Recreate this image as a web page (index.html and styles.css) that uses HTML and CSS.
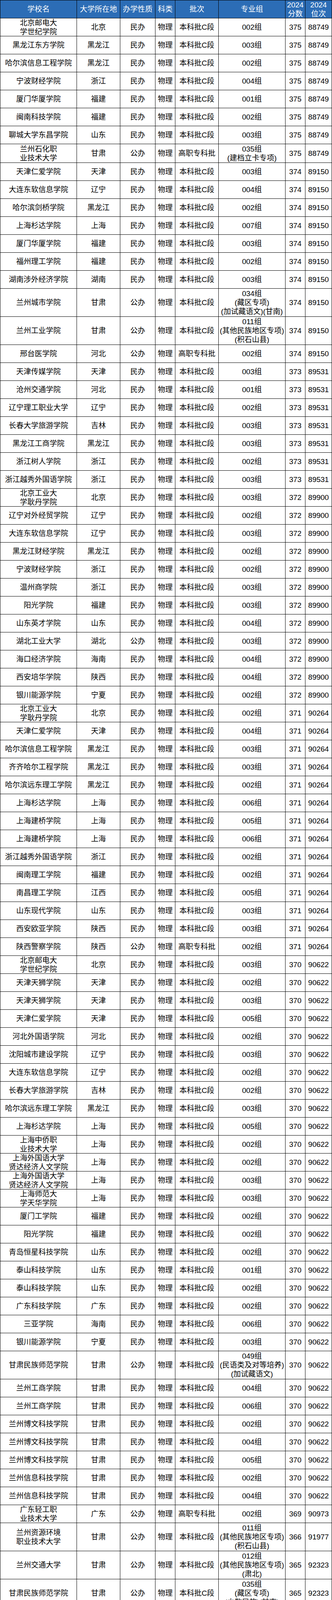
FILE: index.html
```html
<!DOCTYPE html>
<html lang="zh-CN">
<head>
<meta charset="utf-8">
<title>2024 分数位次</title>
<link rel="stylesheet" href="styles.css">
</head>
<body>
<div class="sheet">
<div class="row head"><div>学校名</div><div>大学所在地</div><div>办学性质</div><div>科类</div><div>批次</div><div>专业组</div><div><span>2024<br>分数</span></div><div><span>2024<br>位次</span></div></div>
<div class="row"><div><span>北京邮电大<br>学世纪学院</span></div><div>北京</div><div>民办</div><div>物理</div><div>本科批C段</div><div>002组</div><div>375</div><div>88749</div></div>
<div class="row"><div>黑龙江东方学院</div><div>黑龙江</div><div>民办</div><div>物理</div><div>本科批C段</div><div>003组</div><div>375</div><div>88749</div></div>
<div class="row"><div>哈尔滨信息工程学院</div><div>黑龙江</div><div>民办</div><div>物理</div><div>本科批C段</div><div>002组</div><div>375</div><div>88749</div></div>
<div class="row"><div>宁波财经学院</div><div>浙江</div><div>民办</div><div>物理</div><div>本科批C段</div><div>004组</div><div>375</div><div>88749</div></div>
<div class="row"><div>厦门华厦学院</div><div>福建</div><div>民办</div><div>物理</div><div>本科批C段</div><div>001组</div><div>375</div><div>88749</div></div>
<div class="row"><div>闽南科技学院</div><div>福建</div><div>民办</div><div>物理</div><div>本科批C段</div><div>002组</div><div>375</div><div>88749</div></div>
<div class="row"><div>聊城大学东昌学院</div><div>山东</div><div>民办</div><div>物理</div><div>本科批C段</div><div>003组</div><div>375</div><div>88749</div></div>
<div class="row h48"><div><span>兰州石化职<br>业技术大学</span></div><div>甘肃</div><div>公办</div><div>物理</div><div>高职专科批</div><div><span>035组<br>(建档立卡专项)</span></div><div>375</div><div>88749</div></div>
<div class="row"><div>天津仁爱学院</div><div>天津</div><div>民办</div><div>物理</div><div>本科批C段</div><div>003组</div><div>374</div><div>89150</div></div>
<div class="row"><div>大连东软信息学院</div><div>辽宁</div><div>民办</div><div>物理</div><div>本科批C段</div><div>004组</div><div>374</div><div>89150</div></div>
<div class="row"><div>哈尔滨剑桥学院</div><div>黑龙江</div><div>民办</div><div>物理</div><div>本科批C段</div><div>002组</div><div>374</div><div>89150</div></div>
<div class="row"><div>上海杉达学院</div><div>上海</div><div>民办</div><div>物理</div><div>本科批C段</div><div>007组</div><div>374</div><div>89150</div></div>
<div class="row"><div>厦门华厦学院</div><div>福建</div><div>民办</div><div>物理</div><div>本科批C段</div><div>003组</div><div>374</div><div>89150</div></div>
<div class="row"><div>福州理工学院</div><div>福建</div><div>民办</div><div>物理</div><div>本科批C段</div><div>002组</div><div>374</div><div>89150</div></div>
<div class="row"><div>湖南涉外经济学院</div><div>湖南</div><div>民办</div><div>物理</div><div>本科批C段</div><div>003组</div><div>374</div><div>89150</div></div>
<div class="row h72"><div>兰州城市学院</div><div>甘肃</div><div>公办</div><div>物理</div><div>本科批C段</div><div><span>034组<br>(藏区专项)<br>(加试藏语文)(甘南)</span></div><div>374</div><div>89150</div></div>
<div class="row h72"><div>兰州工业学院</div><div>甘肃</div><div>公办</div><div>物理</div><div>本科批C段</div><div><span>011组<br>(其他民族地区专项)<br>(积石山县)</span></div><div>374</div><div>89150</div></div>
<div class="row"><div>邢台医学院</div><div>河北</div><div>公办</div><div>物理</div><div>高职专科批</div><div>002组</div><div>374</div><div>89150</div></div>
<div class="row"><div>天津传媒学院</div><div>天津</div><div>民办</div><div>物理</div><div>本科批C段</div><div>003组</div><div>373</div><div>89531</div></div>
<div class="row"><div>沧州交通学院</div><div>河北</div><div>民办</div><div>物理</div><div>本科批C段</div><div>001组</div><div>373</div><div>89531</div></div>
<div class="row"><div>辽宁理工职业大学</div><div>辽宁</div><div>民办</div><div>物理</div><div>本科批C段</div><div>002组</div><div>373</div><div>89531</div></div>
<div class="row"><div>长春大学旅游学院</div><div>吉林</div><div>民办</div><div>物理</div><div>本科批C段</div><div>003组</div><div>373</div><div>89531</div></div>
<div class="row"><div>黑龙江工商学院</div><div>黑龙江</div><div>民办</div><div>物理</div><div>本科批C段</div><div>003组</div><div>373</div><div>89531</div></div>
<div class="row"><div>浙江树人学院</div><div>浙江</div><div>民办</div><div>物理</div><div>本科批C段</div><div>002组</div><div>373</div><div>89531</div></div>
<div class="row"><div>浙江越秀外国语学院</div><div>浙江</div><div>民办</div><div>物理</div><div>本科批C段</div><div>003组</div><div>373</div><div>89531</div></div>
<div class="row"><div><span>北京工业大<br>学耿丹学院</span></div><div>北京</div><div>民办</div><div>物理</div><div>本科批C段</div><div>003组</div><div>372</div><div>89900</div></div>
<div class="row"><div>辽宁对外经贸学院</div><div>辽宁</div><div>民办</div><div>物理</div><div>本科批C段</div><div>002组</div><div>372</div><div>89900</div></div>
<div class="row"><div>大连东软信息学院</div><div>辽宁</div><div>民办</div><div>物理</div><div>本科批C段</div><div>003组</div><div>372</div><div>89900</div></div>
<div class="row"><div>黑龙江财经学院</div><div>黑龙江</div><div>民办</div><div>物理</div><div>本科批C段</div><div>002组</div><div>372</div><div>89900</div></div>
<div class="row"><div>宁波财经学院</div><div>浙江</div><div>民办</div><div>物理</div><div>本科批C段</div><div>002组</div><div>372</div><div>89900</div></div>
<div class="row"><div>温州商学院</div><div>浙江</div><div>民办</div><div>物理</div><div>本科批C段</div><div>003组</div><div>372</div><div>89900</div></div>
<div class="row"><div>阳光学院</div><div>福建</div><div>民办</div><div>物理</div><div>本科批C段</div><div>003组</div><div>372</div><div>89900</div></div>
<div class="row"><div>山东英才学院</div><div>山东</div><div>民办</div><div>物理</div><div>本科批C段</div><div>004组</div><div>372</div><div>89900</div></div>
<div class="row"><div>湖北工业大学</div><div>湖北</div><div>公办</div><div>物理</div><div>本科批C段</div><div>003组</div><div>372</div><div>89900</div></div>
<div class="row"><div>海口经济学院</div><div>海南</div><div>民办</div><div>物理</div><div>本科批C段</div><div>004组</div><div>372</div><div>89900</div></div>
<div class="row"><div>西安培华学院</div><div>陕西</div><div>民办</div><div>物理</div><div>本科批C段</div><div>004组</div><div>372</div><div>89900</div></div>
<div class="row"><div>银川能源学院</div><div>宁夏</div><div>民办</div><div>物理</div><div>本科批C段</div><div>002组</div><div>372</div><div>89900</div></div>
<div class="row"><div><span>北京工业大<br>学耿丹学院</span></div><div>北京</div><div>民办</div><div>物理</div><div>本科批C段</div><div>002组</div><div>371</div><div>90264</div></div>
<div class="row"><div>天津仁爱学院</div><div>天津</div><div>民办</div><div>物理</div><div>本科批C段</div><div>004组</div><div>371</div><div>90264</div></div>
<div class="row"><div>哈尔滨信息工程学院</div><div>黑龙江</div><div>民办</div><div>物理</div><div>本科批C段</div><div>003组</div><div>371</div><div>90264</div></div>
<div class="row"><div>齐齐哈尔工程学院</div><div>黑龙江</div><div>民办</div><div>物理</div><div>本科批C段</div><div>003组</div><div>371</div><div>90264</div></div>
<div class="row"><div>哈尔滨远东理工学院</div><div>黑龙江</div><div>民办</div><div>物理</div><div>本科批C段</div><div>002组</div><div>371</div><div>90264</div></div>
<div class="row"><div>上海杉达学院</div><div>上海</div><div>民办</div><div>物理</div><div>本科批C段</div><div>006组</div><div>371</div><div>90264</div></div>
<div class="row"><div>上海建桥学院</div><div>上海</div><div>民办</div><div>物理</div><div>本科批C段</div><div>005组</div><div>371</div><div>90264</div></div>
<div class="row"><div>上海建桥学院</div><div>上海</div><div>民办</div><div>物理</div><div>本科批C段</div><div>006组</div><div>371</div><div>90264</div></div>
<div class="row"><div>浙江越秀外国语学院</div><div>浙江</div><div>民办</div><div>物理</div><div>本科批C段</div><div>002组</div><div>371</div><div>90264</div></div>
<div class="row"><div>闽南理工学院</div><div>福建</div><div>民办</div><div>物理</div><div>本科批C段</div><div>002组</div><div>371</div><div>90264</div></div>
<div class="row"><div>南昌理工学院</div><div>江西</div><div>民办</div><div>物理</div><div>本科批C段</div><div>005组</div><div>371</div><div>90264</div></div>
<div class="row"><div>山东现代学院</div><div>山东</div><div>民办</div><div>物理</div><div>本科批C段</div><div>003组</div><div>371</div><div>90264</div></div>
<div class="row"><div>西安欧亚学院</div><div>陕西</div><div>民办</div><div>物理</div><div>本科批C段</div><div>003组</div><div>371</div><div>90264</div></div>
<div class="row"><div>陕西警察学院</div><div>陕西</div><div>公办</div><div>物理</div><div>高职专科批</div><div>002组</div><div>371</div><div>90264</div></div>
<div class="row"><div><span>北京邮电大<br>学世纪学院</span></div><div>北京</div><div>民办</div><div>物理</div><div>本科批C段</div><div>003组</div><div>370</div><div>90622</div></div>
<div class="row"><div>天津天狮学院</div><div>天津</div><div>民办</div><div>物理</div><div>本科批C段</div><div>002组</div><div>370</div><div>90622</div></div>
<div class="row"><div>天津天狮学院</div><div>天津</div><div>民办</div><div>物理</div><div>本科批C段</div><div>003组</div><div>370</div><div>90622</div></div>
<div class="row"><div>天津仁爱学院</div><div>天津</div><div>民办</div><div>物理</div><div>本科批C段</div><div>005组</div><div>370</div><div>90622</div></div>
<div class="row"><div>河北外国语学院</div><div>河北</div><div>民办</div><div>物理</div><div>本科批C段</div><div>002组</div><div>370</div><div>90622</div></div>
<div class="row"><div>沈阳城市建设学院</div><div>辽宁</div><div>民办</div><div>物理</div><div>本科批C段</div><div>003组</div><div>370</div><div>90622</div></div>
<div class="row"><div>大连东软信息学院</div><div>辽宁</div><div>民办</div><div>物理</div><div>本科批C段</div><div>002组</div><div>370</div><div>90622</div></div>
<div class="row"><div>长春大学旅游学院</div><div>吉林</div><div>民办</div><div>物理</div><div>本科批C段</div><div>002组</div><div>370</div><div>90622</div></div>
<div class="row"><div>哈尔滨远东理工学院</div><div>黑龙江</div><div>民办</div><div>物理</div><div>本科批C段</div><div>003组</div><div>370</div><div>90622</div></div>
<div class="row"><div>上海杉达学院</div><div>上海</div><div>民办</div><div>物理</div><div>本科批C段</div><div>005组</div><div>370</div><div>90622</div></div>
<div class="row"><div><span>上海中侨职<br>业技术大学</span></div><div>上海</div><div>民办</div><div>物理</div><div>本科批C段</div><div>002组</div><div>370</div><div>90622</div></div>
<div class="row"><div><span>上海外国语大学<br>贤达经济人文学院</span></div><div>上海</div><div>民办</div><div>物理</div><div>本科批C段</div><div>002组</div><div>370</div><div>90622</div></div>
<div class="row"><div><span>上海外国语大学<br>贤达经济人文学院</span></div><div>上海</div><div>民办</div><div>物理</div><div>本科批C段</div><div>003组</div><div>370</div><div>90622</div></div>
<div class="row"><div><span>上海师范大<br>学天华学院</span></div><div>上海</div><div>民办</div><div>物理</div><div>本科批C段</div><div>003组</div><div>370</div><div>90622</div></div>
<div class="row"><div>厦门工学院</div><div>福建</div><div>民办</div><div>物理</div><div>本科批C段</div><div>002组</div><div>370</div><div>90622</div></div>
<div class="row"><div>阳光学院</div><div>福建</div><div>民办</div><div>物理</div><div>本科批C段</div><div>002组</div><div>370</div><div>90622</div></div>
<div class="row"><div>青岛恒星科技学院</div><div>山东</div><div>民办</div><div>物理</div><div>本科批C段</div><div>002组</div><div>370</div><div>90622</div></div>
<div class="row"><div>泰山科技学院</div><div>山东</div><div>民办</div><div>物理</div><div>本科批C段</div><div>001组</div><div>370</div><div>90622</div></div>
<div class="row"><div>泰山科技学院</div><div>山东</div><div>民办</div><div>物理</div><div>本科批C段</div><div>002组</div><div>370</div><div>90622</div></div>
<div class="row"><div>广东科技学院</div><div>广东</div><div>民办</div><div>物理</div><div>本科批C段</div><div>002组</div><div>370</div><div>90622</div></div>
<div class="row"><div>三亚学院</div><div>海南</div><div>民办</div><div>物理</div><div>本科批C段</div><div>006组</div><div>370</div><div>90622</div></div>
<div class="row"><div>银川能源学院</div><div>宁夏</div><div>民办</div><div>物理</div><div>本科批C段</div><div>003组</div><div>370</div><div>90622</div></div>
<div class="row h72"><div>甘肃民族师范学院</div><div>甘肃</div><div>公办</div><div>物理</div><div>本科批C段</div><div><span>049组<br>(民语类及对等培养)<br>(加试藏语文)</span></div><div>370</div><div>90622</div></div>
<div class="row"><div>兰州工商学院</div><div>甘肃</div><div>民办</div><div>物理</div><div>本科批C段</div><div>004组</div><div>370</div><div>90622</div></div>
<div class="row"><div>兰州工商学院</div><div>甘肃</div><div>民办</div><div>物理</div><div>本科批C段</div><div>006组</div><div>370</div><div>90622</div></div>
<div class="row"><div>兰州博文科技学院</div><div>甘肃</div><div>民办</div><div>物理</div><div>本科批C段</div><div>002组</div><div>370</div><div>90622</div></div>
<div class="row"><div>兰州博文科技学院</div><div>甘肃</div><div>民办</div><div>物理</div><div>本科批C段</div><div>004组</div><div>370</div><div>90622</div></div>
<div class="row"><div>兰州博文科技学院</div><div>甘肃</div><div>民办</div><div>物理</div><div>本科批C段</div><div>005组</div><div>370</div><div>90622</div></div>
<div class="row"><div>兰州信息科技学院</div><div>甘肃</div><div>民办</div><div>物理</div><div>本科批C段</div><div>002组</div><div>370</div><div>90622</div></div>
<div class="row"><div>兰州信息科技学院</div><div>甘肃</div><div>民办</div><div>物理</div><div>本科批C段</div><div>004组</div><div>370</div><div>90622</div></div>
<div class="row"><div><span>广东轻工职<br>业技术大学</span></div><div>广东</div><div>公办</div><div>物理</div><div>高职专科批</div><div>002组</div><div>369</div><div>90973</div></div>
<div class="row h72"><div><span>兰州资源环境<br>职业技术大学</span></div><div>甘肃</div><div>公办</div><div>物理</div><div>本科批C段</div><div><span>011组<br>(其他民族地区专项)<br>(积石山县)</span></div><div>366</div><div>91977</div></div>
<div class="row h72"><div>兰州交通大学</div><div>甘肃</div><div>公办</div><div>物理</div><div>本科批C段</div><div><span>012组<br>(其他民族地区专项)<br>(肃北)</span></div><div>365</div><div>92323</div></div>
<div class="row h72"><div>甘肃民族师范学院</div><div>甘肃</div><div>公办</div><div>物理</div><div>本科批C段</div><div><span>035组<br>(藏区专项)<br>(少数民族)(甘南)</span></div><div>365</div><div>92323</div></div>
<div class="row"><div><span>兰州石化职<br>业技术大学</span></div><div>甘肃</div><div>公办</div><div>物理</div><div>高职专科批</div><div>034组</div><div>365</div><div>92323</div></div>
</div>
</body>
</html>
```

FILE: styles.css
```css
html, body {
  margin: 0;
  padding: 0;
  background: #ffffff;
}

body {
  font-family: "Liberation Sans", "Noto Sans CJK SC", sans-serif;
  font-size: 19px;
  color: #000000;
}

.sheet {
  width: 850px;
  box-sizing: border-box;
  border-top: 1px solid #000000;
  border-left: 1px solid #000000;
}

.row {
  display: grid;
  grid-template-columns: 196px 111px 90px 51px 111px 171px 51px 68px;
  height: 46px;
}

.row.h48 {
  height: 48px;
}

.row.h72 {
  height: 72px;
}

.row > div {
  box-sizing: border-box;
  display: flex;
  align-items: center;
  justify-content: center;
  text-align: center;
  border-right: 1px solid #000000;
  border-bottom: 1px solid #000000;
  line-height: 23px;
  white-space: nowrap;
  min-width: 0;
  min-height: 0;
  overflow: visible;
}

.row > div > span {
  display: block;
}

.head > div {
  background: #2c6db6;
  color: #ffffff;
}
```
